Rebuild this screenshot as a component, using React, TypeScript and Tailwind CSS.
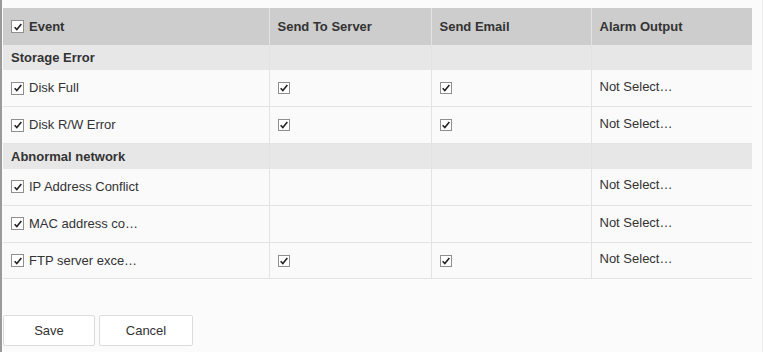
import React from "react";

type Row = {
  name: string;
  server: boolean | null;
  email: boolean | null;
  output: string;
};

const groups: { title: string; rows: Row[] }[] = [
  {
    title: "Storage Error",
    rows: [
      { name: "Disk Full", server: true, email: true, output: "Not Select…" },
      { name: "Disk R/W Error", server: true, email: true, output: "Not Select…" },
    ],
  },
  {
    title: "Abnormal network",
    rows: [
      { name: "IP Address Conflict", server: null, email: null, output: "Not Select…" },
      { name: "MAC address co…", server: null, email: null, output: "Not Select…" },
      { name: "FTP server exce…", server: true, email: true, output: "Not Select…" },
    ],
  },
];

const Check = ({ small }: { small?: boolean }) => (
  <span
    className={
      small
        ? "inline-flex w-[12px] h-[12px] border border-[#8f8f8f] bg-white items-center justify-center shrink-0"
        : "inline-flex w-[13px] h-[13px] border border-[#8f8f8f] bg-white items-center justify-center shrink-0"
    }
  >
    <svg viewBox="0 0 12 12" className="w-[10px] h-[10px]">
      <path d="M2 6.2 L4.6 9 L10 2.4" fill="none" stroke="#222" strokeWidth="1.9" />
    </svg>
  </span>
);

const cell = "border-r border-[#e3e3e3] last:border-r-0 px-2";

const App = () => {
  return (
    <div className="w-[763px] h-[352px] bg-[#fbfbfb] flex font-['Liberation_Sans',Arial,sans-serif] text-[13px] text-[#333]">
      <div className="w-[2px] bg-[#9a9a9a]" />
      <div className="flex-1 flex flex-col pl-[1px] pt-[8px] pr-[9px] border-r border-[#ececec]">
        <table className="table-fixed border-collapse w-[749px]">
          <colgroup>
            <col className="w-[266px]" />
            <col className="w-[162px]" />
            <col className="w-[160px]" />
            <col className="w-[161px]" />
          </colgroup>
          <thead>
            <tr className="h-[37px] bg-[#cdcdcd] font-bold text-left">
              <th className={`${cell} pl-[8px]`}>
                <div className="flex items-center gap-[5px]">
                  <Check />
                  <span>Event</span>
                </div>
              </th>
              <th className={cell}>Send To Server</th>
              <th className={cell}>Send Email</th>
              <th className={cell}>Alarm Output</th>
            </tr>
          </thead>
          <tbody>
            {groups.map((g) => (
              <React.Fragment key={g.title}>
                <tr className="h-[25px] bg-[#e7e7e7] font-bold">
                  <td className={`${cell} pl-[8px]`}>{g.title}</td>
                  <td className={cell} />
                  <td className={cell} />
                  <td className={cell} />
                </tr>
                {g.rows.map((r) => (
                  <tr key={r.name} className="h-[36.8px] bg-[#fafafa] border-b border-[#e3e3e3]">
                    <td className={`${cell} pl-[8px]`}>
                      <div className="flex items-center gap-[5px]">
                        <Check />
                        <span>{r.name}</span>
                      </div>
                    </td>
                    <td className={cell}>
                      {r.server && (
                        <div className="flex items-center">
                          <Check small />
                        </div>
                      )}
                    </td>
                    <td className={cell}>
                      {r.email && (
                        <div className="flex items-center">
                          <Check small />
                        </div>
                      )}
                    </td>
                    <td className={cell}>
                      <div className="-mt-[3px]">{r.output}</div>
                    </td>
                  </tr>
                ))}
              </React.Fragment>
            ))}
          </tbody>
        </table>
        <div className="flex gap-[4px] mt-[36px]">
          <button className="w-[92px] h-[31px] bg-white border border-[#dcdcdc] rounded-[2px] text-[#333]">
            Save
          </button>
          <button className="w-[94px] h-[31px] bg-white border border-[#dcdcdc] rounded-[2px] text-[#333]">
            Cancel
          </button>
        </div>
      </div>
    </div>
  );
};

export default App;
